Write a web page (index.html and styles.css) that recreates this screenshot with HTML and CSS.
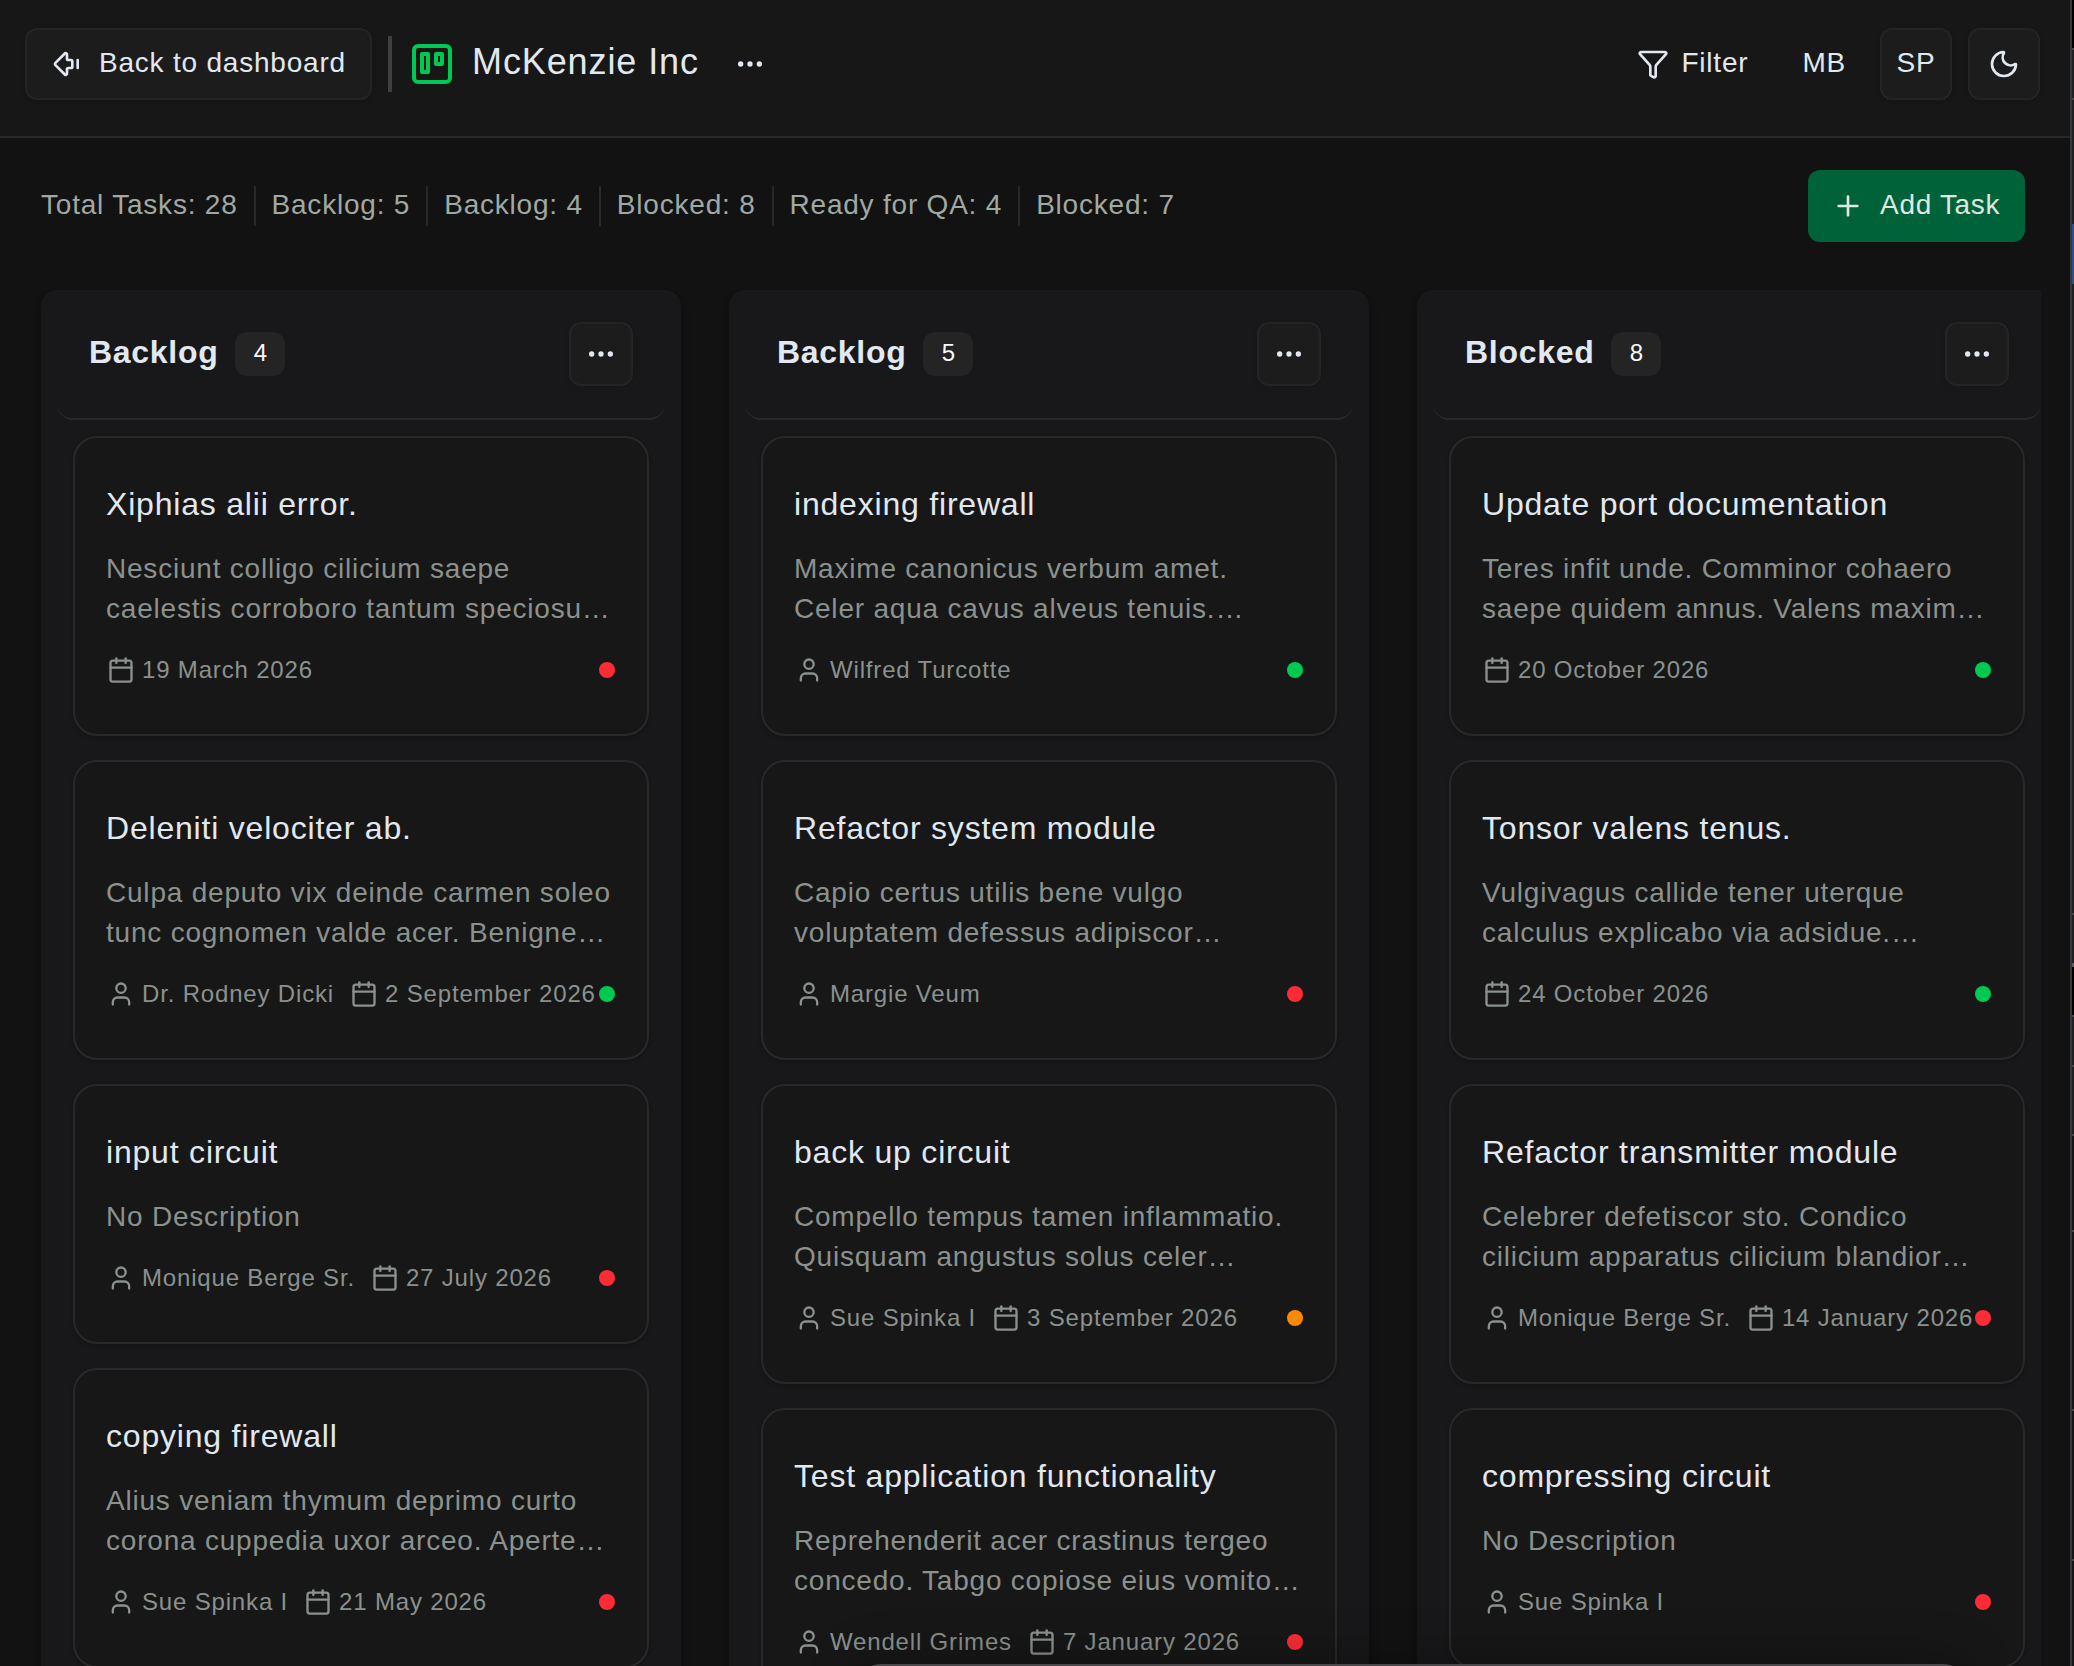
FILE: index.html
```
<!DOCTYPE html>
<html lang="en">
<head>
<meta charset="utf-8">
<title>McKenzie Inc</title>
<link rel="stylesheet" href="styles.css">
</head>
<body>
<svg class="sprite" aria-hidden="true">
  <symbol id="back" viewBox="0 0 24 24"><path d="M13 9a1 1 0 0 1-1-1V5.061a1 1 0 0 0-1.811-.75l-6.835 6.836a1.207 1.207 0 0 0 0 1.707l6.835 6.835a1 1 0 0 0 1.811-.75V16a1 1 0 0 1 1-1h2a1 1 0 0 0 1-1v-4a1 1 0 0 0-1-1z"/><path d="M20 9v6"/></symbol>
  <symbol id="board" viewBox="0 0 24 24"><rect x="3" y="3" width="18" height="18" rx="2"/><rect x="7" y="7" width="3" height="9"/><rect x="14" y="7" width="3" height="5"/></symbol>
  <symbol id="dots" viewBox="0 0 24 24"><circle cx="12" cy="12" r="1"/><circle cx="19" cy="12" r="1"/><circle cx="5" cy="12" r="1"/></symbol>
  <symbol id="funnel" viewBox="0 0 24 24"><path d="M10 20a1 1 0 0 0 .553.895l2 1A1 1 0 0 0 14 21v-7a2 2 0 0 1 .517-1.341L21.74 4.67A1 1 0 0 0 21 3H3a1 1 0 0 0-.742 1.67l7.225 7.989A2 2 0 0 1 10 14z"/></symbol>
  <symbol id="moon" viewBox="0 0 24 24"><path d="M20.985 12.486a9 9 0 1 1-9.473-9.472c.405-.022.617.46.402.803a6 6 0 0 0 8.268 8.268c.344-.215.825-.004.803.401"/></symbol>
  <symbol id="plus" viewBox="0 0 24 24"><path d="M5 12h14M12 5v14"/></symbol>
  <symbol id="cal" viewBox="0 0 24 24"><path d="M8 2v4"/><path d="M16 2v4"/><rect x="3" y="4" width="18" height="18" rx="2"/><path d="M3 10h18"/></symbol>
  <symbol id="user" viewBox="0 0 24 24"><path d="M19 21v-2a4 4 0 0 0-4-4H9a4 4 0 0 0-4 4v2"/><circle cx="12" cy="7" r="4"/></symbol>
</svg>
<div class="app">
  <header class="topbar">
    <a class="btn back"><svg class="icon"><use href="#back"/></svg><span>Back to dashboard</span></a>
    <span class="divider"></span>
    <svg class="icon logo"><use href="#board"/></svg>
    <h1 class="name">McKenzie Inc</h1>
    <svg class="icon more"><use href="#dots"/></svg>
    <div class="actions">
      <span class="filter"><svg class="icon"><use href="#funnel"/></svg><span>Filter</span></span>
      <span class="initials">MB</span>
      <span class="btn square">SP</span>
      <span class="btn square"><svg class="icon"><use href="#moon"/></svg></span>
    </div>
  </header>
  <main class="main">
    <div class="toolbar">
      <ul class="stats">
        <li>Total Tasks: 28</li><li>Backlog: 5</li><li>Backlog: 4</li><li>Blocked: 8</li><li>Ready for QA: 4</li><li>Blocked: 7</li>
      </ul>
      <span class="add"><svg class="icon"><use href="#plus"/></svg><span>Add Task</span></span>
    </div>
    <div class="board">
      <section class="column">
        <header class="colhead"><h2>Backlog</h2><span class="count">4</span><span class="btn menu"><svg class="icon"><use href="#dots"/></svg></span></header>
        <article class="card"><h3>Xiphias alii error.</h3><p>Nesciunt colligo cilicium saepe<br>caelestis corroboro tantum speciosu…</p>
          <footer><span class="meta"><svg class="icon"><use href="#cal"/></svg>19 March 2026</span><i class="dot red"></i></footer></article>
        <article class="card"><h3>Deleniti velociter ab.</h3><p>Culpa deputo vix deinde carmen soleo<br>tunc cognomen valde acer. Benigne…</p>
          <footer><span class="meta"><svg class="icon"><use href="#user"/></svg>Dr. Rodney Dicki</span><span class="meta"><svg class="icon"><use href="#cal"/></svg>2 September 2026</span><i class="dot green"></i></footer></article>
        <article class="card"><h3>input circuit</h3><p>No Description</p>
          <footer><span class="meta"><svg class="icon"><use href="#user"/></svg>Monique Berge Sr.</span><span class="meta"><svg class="icon"><use href="#cal"/></svg>27 July 2026</span><i class="dot red"></i></footer></article>
        <article class="card"><h3>copying firewall</h3><p>Alius veniam thymum deprimo curto<br>corona cuppedia uxor arceo. Aperte…</p>
          <footer><span class="meta"><svg class="icon"><use href="#user"/></svg>Sue Spinka I</span><span class="meta"><svg class="icon"><use href="#cal"/></svg>21 May 2026</span><i class="dot red"></i></footer></article>
      </section>
      <section class="column">
        <header class="colhead"><h2>Backlog</h2><span class="count">5</span><span class="btn menu"><svg class="icon"><use href="#dots"/></svg></span></header>
        <article class="card"><h3>indexing firewall</h3><p>Maxime canonicus verbum amet.<br>Celer aqua cavus alveus tenuis.…</p>
          <footer><span class="meta"><svg class="icon"><use href="#user"/></svg>Wilfred Turcotte</span><i class="dot green"></i></footer></article>
        <article class="card"><h3>Refactor system module</h3><p>Capio certus utilis bene vulgo<br>voluptatem defessus adipiscor…</p>
          <footer><span class="meta"><svg class="icon"><use href="#user"/></svg>Margie Veum</span><i class="dot red"></i></footer></article>
        <article class="card"><h3>back up circuit</h3><p>Compello tempus tamen inflammatio.<br>Quisquam angustus solus celer…</p>
          <footer><span class="meta"><svg class="icon"><use href="#user"/></svg>Sue Spinka I</span><span class="meta"><svg class="icon"><use href="#cal"/></svg>3 September 2026</span><i class="dot orange"></i></footer></article>
        <article class="card"><h3>Test application functionality</h3><p>Reprehenderit acer crastinus tergeo<br>concedo. Tabgo copiose eius vomito…</p>
          <footer><span class="meta"><svg class="icon"><use href="#user"/></svg>Wendell Grimes</span><span class="meta"><svg class="icon"><use href="#cal"/></svg>7 January 2026</span><i class="dot red"></i></footer></article>
      </section>
      <section class="column">
        <header class="colhead"><h2>Blocked</h2><span class="count">8</span><span class="btn menu"><svg class="icon"><use href="#dots"/></svg></span></header>
        <article class="card"><h3>Update port documentation</h3><p>Teres infit unde. Comminor cohaero<br>saepe quidem annus. Valens maxim…</p>
          <footer><span class="meta"><svg class="icon"><use href="#cal"/></svg>20 October 2026</span><i class="dot green"></i></footer></article>
        <article class="card"><h3>Tonsor valens tenus.</h3><p>Vulgivagus callide tener uterque<br>calculus explicabo via adsidue.…</p>
          <footer><span class="meta"><svg class="icon"><use href="#cal"/></svg>24 October 2026</span><i class="dot green"></i></footer></article>
        <article class="card"><h3>Refactor transmitter module</h3><p>Celebrer defetiscor sto. Condico<br>cilicium apparatus cilicium blandior…</p>
          <footer><span class="meta"><svg class="icon"><use href="#user"/></svg>Monique Berge Sr.</span><span class="meta"><svg class="icon"><use href="#cal"/></svg>14 January 2026</span><i class="dot red"></i></footer></article>
        <article class="card"><h3>compressing circuit</h3><p>No Description</p>
          <footer><span class="meta"><svg class="icon"><use href="#user"/></svg>Sue Spinka I</span><i class="dot red"></i></footer></article>
      </section>
    </div>
  </main>
</div>
<div class="edge"></div>
<div class="sheet"></div>
</body>
</html>
```
FILE: styles.css
```
* { box-sizing: border-box; margin: 0; padding: 0; }
body {
  display: flex;
  height: 1666px;
  overflow: hidden;
  position: relative;
  background: #121212;
  color: #e2e8f0;
  font-family: "Liberation Sans", Arial, sans-serif;
  font-size: 28px;
  line-height: 40px;
  letter-spacing: 0.79px;
}
.sprite { position: absolute; width: 0; height: 0; }
.icon {
  width: 32px; height: 32px; flex: none;
  fill: none; stroke: currentColor; stroke-width: 2;
  stroke-linecap: round; stroke-linejoin: round;
}
.app { width: 2070px; height: 1666px; overflow: hidden; }

.topbar {
  display: flex; align-items: flex-start;
  height: 138px; padding: 28px 30px 0 25px;
  background: #171717; border-bottom: 2px solid #292929;
}
.topbar > * { flex: none; }
.btn {
  display: flex; align-items: center; justify-content: center;
  background: #1c1c1c; border: 2px solid #242424; border-radius: 12px;
  box-shadow: 0 2px 4px rgba(0, 0, 0, .12);
}
.btn > span, .filter > span, .add > span { position: relative; top: -1px; }
.back { width: 347px; height: 72px; gap: 16px; justify-content: flex-start; padding-left: 24px; white-space: nowrap; }
.divider { width: 4px; height: 56px; margin: 8px 16px 0; background: #404040; }
.logo { width: 48px; height: 48px; margin-top: 12px; color: #00c951; }
.name { margin: 10px 0 0 16px; width: 262px; font-size: 36px; font-weight: 400; line-height: 48px; letter-spacing: .9px; white-space: nowrap; }
.more { margin-top: 20px; }
.actions { display: flex; align-items: center; margin-left: auto; height: 72px; }
.filter { display: flex; align-items: center; gap: 12px; margin-right: 54px; }
.initials { margin-right: 34px; padding-bottom: 2px; }
.square { width: 72px; height: 72px; padding-bottom: 2px; }
.square + .square { margin-left: 16px; padding-bottom: 0; }

.main { padding: 32px 29px 0 25px; }
.toolbar { display: flex; justify-content: space-between; align-items: center; height: 72px; padding: 0 16px; }
.stats { display: flex; list-style: none; color: #a0a8a4; }
.stats li { line-height: 38px; height: 40px; padding: 0 16px; border-left: 2px solid #292929; white-space: nowrap; }
.stats li:first-child { padding-left: 0; border-left: 0; }
.add {
  display: flex; align-items: center; gap: 16px;
  width: 217px; height: 72px; padding-left: 24px;
  background: #006239; color: #dde8e3; border-radius: 12px; white-space: nowrap;
  letter-spacing: .7px;
}
.board { display: flex; gap: 48px; height: 1424px; margin-top: 16px; padding: 32px 16px 0; overflow: hidden; }
.column {
  flex: none; width: 640px; height: 1500px; padding: 0 16px;
  background: #18181a; border-radius: 16px;
  box-shadow: 0 8px 12px -2px rgba(0, 0, 0, .3), 0 4px 8px -4px rgba(0, 0, 0, .3);
}
.colhead { display: flex; align-items: center; height: 130px; padding: 0 32px; border-bottom: 2px solid #292929; border-radius: 16px; margin-bottom: 16px; }
.colhead h2 { font-size: 32px; letter-spacing: .7px; line-height: 40px; position: relative; top: -2px; }
.count { margin-left: 17px; width: 50px; height: 44px; border-radius: 12px; background: #242424; color: #fafafa; font-size: 24px; line-height: 42px; text-align: center; letter-spacing: 0; }
.menu { width: 64px; height: 64px; margin-left: auto; }
.card {
  margin: 0 16px 24px; padding: 46px 32px 48px;
  background: #171717; border: 2px solid #292929; border-radius: 24px;
  box-shadow: 0 2px 4px rgba(0, 0, 0, .2);
}
.card h3 { font-size: 32px; font-weight: 400; line-height: 40px; letter-spacing: .8px; margin: 0 0 25px -1px; white-space: nowrap; }
.card p { margin-left: -1px; color: #8b918e; white-space: nowrap; }
.card footer { display: flex; align-items: center; height: 32px; margin-top: 25px; color: #8b918e; }
.meta { display: flex; align-items: center; gap: 7px; font-size: 24px; line-height: 32px; letter-spacing: .83px; white-space: nowrap; }
.meta + .meta { margin-left: 16px; }
.meta .icon { width: 28px; height: 28px; }
.dot { flex: none; width: 16px; height: 16px; margin-left: auto; border-radius: 50%; }
.red { background: #fb2c36; }
.green { background: #00c951; }
.orange { background: #ff8904; }

.edge {
  width: 4px; border-left: 2px solid #38373c;
  background: linear-gradient(#000 0 48px, #45454a 48px 50px, #1f1f26 50px 98px, #45454a 98px 100px, #1f1f26 100px 224px, #215291 224px 284px, #1f1f26 284px 913px, #45454a 913px 915px, #1f1f26 915px 963px, #5c5c60 963px 967px, #000 967px 1015px, #45454a 1015px 1017px, #1f1f26 1017px 1065px, #45454a 1065px 1067px, #1f1f26 1067px 1134px, #45454a 1134px 1136px, #151519 1136px 1230px, #45454a 1230px 1232px, #151519 1232px 1409px, #45454a 1409px 1411px, #151519 1411px 1559px, #45454a 1559px 1561px, #151519 1561px);
}
.sheet { position: absolute; left: 860px; top: 1664px; width: 1104px; height: 60px; border-top: 2px solid #4a484a; border-radius: 20px; box-shadow: 0 0 50px rgba(0, 0, 0, .35); }
```
